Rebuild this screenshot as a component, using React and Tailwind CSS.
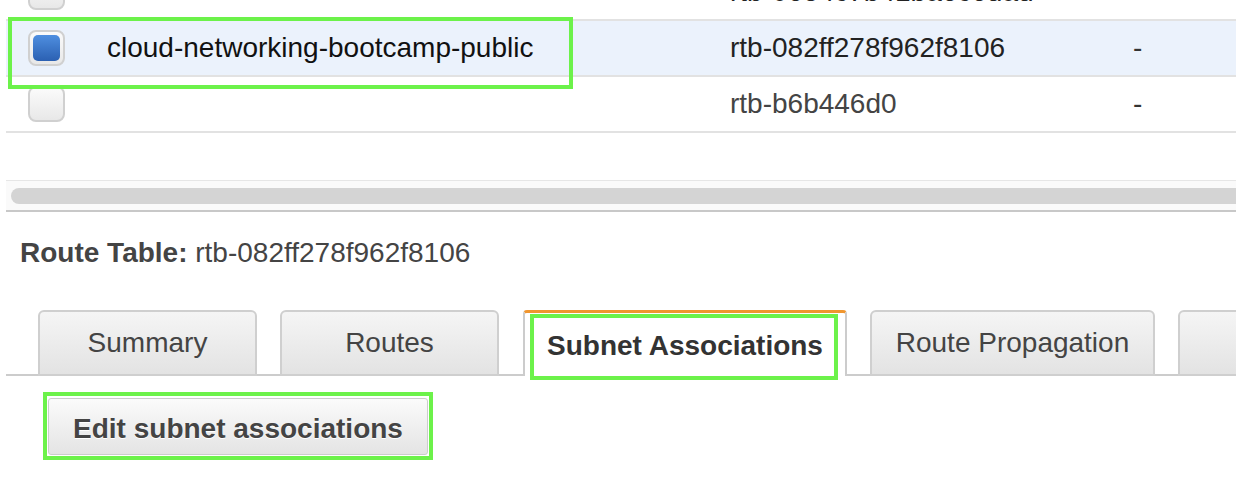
import React from "react";

const rows = [
  { id: "top", name: "", rtb: "rtb-0654c7b41ba6c6dad", main: "", selected: false, partial: true },
  { id: "public", name: "cloud-networking-bootcamp-public", rtb: "rtb-082ff278f962f8106", main: "-", selected: true },
  { id: "default", name: "", rtb: "rtb-b6b446d0", main: "-", selected: false, muted: true },
];

const tabs = [
  { label: "Summary", width: "w-[219px]", ml: "ml-[32px]" },
  { label: "Routes", width: "w-[219px]", ml: "ml-[23px]" },
  { label: "Subnet Associations", width: "w-[324px]", ml: "ml-[24px]", active: true },
  { label: "Route Propagation", width: "w-[285px]", ml: "ml-[23px]" },
  { label: "Tags", width: "w-[100px]", ml: "ml-[23px]", hidden: true },
];

function Checkbox({ checked }) {
  return (
    <div className="flex h-[36px] w-[37px] items-center justify-center rounded-[8px] border-2 border-[#d0d0d0] bg-gradient-to-b from-[#fbfbfb] to-[#e8e8e8]">
      {checked ? (
        <div className="h-[26px] w-[27px] rounded-[5px] bg-gradient-to-b from-[#4f8fe0] to-[#2b60b2]" />
      ) : null}
    </div>
  );
}

function Row({ row, first }) {
  return (
    <div
      className={`flex h-[56px] items-center border-b-2 border-[#e2e2e2] ${
        row.selected ? "bg-[#ebf2fc]" : "bg-white"
      } ${first ? "-mt-[35px]" : ""}`}
    >
      <div className="w-[101px] shrink-0 pl-[22px]">
        <Checkbox checked={row.selected} />
      </div>
      <div className="w-[623px] shrink-0 text-[28px] leading-[32px] text-[#111]">{row.name}</div>
      <div
        className={`w-[403px] shrink-0 text-[28px] leading-[32px] ${
          row.muted ? "text-[#444]" : "text-[#222]"
        }`}
      >
        {row.rtb}
      </div>
      <div className="text-[28px] leading-[32px] text-[#333]">{row.main}</div>
    </div>
  );
}

export default function App() {
  return (
    <div
      className="relative h-[478px] w-[1236px] overflow-hidden bg-white"
      style={{ fontFamily: '"Liberation Sans", Arial, Helvetica, sans-serif' }}
    >
      {/* route tables list */}
      <div className="pl-[6px]">
        {rows.map((row, i) => (
          <Row key={row.id} row={row} first={i === 0} />
        ))}
      </div>

      {/* highlight around selected row */}
      <div className="pointer-events-none absolute left-[8px] top-[17px] h-[72px] w-[565px] border-4 border-[#6cf24a]" />

      {/* horizontal scrollbar */}
      <div className="ml-[6px] mt-[47px] border-t border-[#e6e6e6] border-b-2 border-b-[#c8c8c8] bg-[#fafafa] pb-[6px] pt-[7px]">
        <div className="ml-[5px] h-[16px] rounded-l-full bg-[#d4d4d4]" />
      </div>

      {/* details header */}
      <div className="mt-[25px] pl-[20px] text-[28px] leading-[32px] text-[#444]">
        <span className="font-bold">Route Table:</span> rtb-082ff278f962f8106
      </div>

      {/* tabs */}
      <div className="ml-[6px] mt-[42px] flex h-[65px] items-end border-b-2 border-[#cccccc]">
        {tabs.map((tab) =>
          tab.active ? (
            <div
              key={tab.label}
              className={`relative -mb-[2px] flex h-[66px] shrink-0 items-center justify-center rounded-t-[4px] border-x-2 border-t-[3px] border-x-[#cccccc] border-t-[#f0962e] bg-white pt-[3px] text-[28px] font-bold text-[#333] ${tab.width} ${tab.ml}`}
            >
              Subnet Associations
              <div className="pointer-events-none absolute left-[5px] top-[1px] h-[66px] w-[308px] border-4 border-[#6cf24a]" />
            </div>
          ) : (
            <div
              key={tab.label}
              className={`-mb-[2px] flex h-[66px] shrink-0 items-center justify-center rounded-t-[6px] border-2 border-[#cfcfcf] bg-gradient-to-b from-[#f5f5f5] to-[#e3e3e3] text-[28px] text-[#444] ${tab.width} ${tab.ml}`}
            >
              {tab.hidden ? "" : tab.label}
            </div>
          )
        )}
      </div>

      {/* action button */}
      <div className="relative ml-[48px] mt-[22px] w-[380px]">
        <button className="flex h-[57px] w-[380px] items-center justify-center rounded-[3px] border border-[#cccccc] bg-gradient-to-b from-[#fbfbfb] to-[#e4e4e4] pt-[4px] text-[28px] font-bold text-[#444] [text-shadow:0_1px_0_#fff]">
          Edit subnet associations
        </button>
        <div className="pointer-events-none absolute -left-[5px] -top-[6px] h-[68px] w-[390px] border-4 border-[#6cf24a]" />
      </div>
    </div>
  );
}
